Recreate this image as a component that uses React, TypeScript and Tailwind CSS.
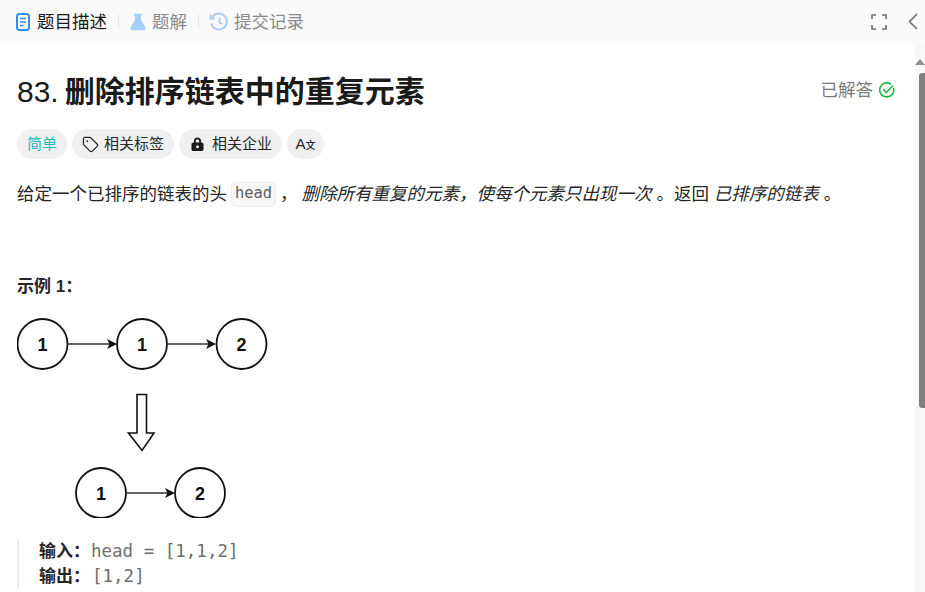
import { Tag } from "lucide-react";

const cjk = "font-['Liberation_Sans','Noto_Sans_CJK_SC',sans-serif]";
const mono = "font-['DejaVu_Sans_Mono',monospace]";

function DescriptionIcon() {
  return (
    <svg width="14" height="18" viewBox="0 0 14 18" fill="none">
      <rect x="1" y="1" width="12" height="16" rx="2.5" stroke="#2f8cf4" strokeWidth="2" />
      <path d="M4 5.5h6M4 9h6M4 12.5h3.5" stroke="#2f8cf4" strokeWidth="1.6" />
    </svg>
  );
}

function FlaskIcon() {
  return (
    <svg width="16" height="18" viewBox="0 0 16 18">
      <path
        d="M4 .8h8v1.600h-1v4.400l4.400 7.600c.7 1.300-.1 2.800-1.600 2.800H2.200c-1.500 0-2.300-1.500-1.600-2.800L5 6.800V2.400H4z"
        fill="#a6cefa"
      />
    </svg>
  );
}

function HistoryIcon() {
  return (
    <svg width="20" height="20" viewBox="0 0 20 20" fill="none" stroke="#a6cefa" strokeWidth="1.9">
      <path d="M3.200 5.200A8 8 0 1 1 2.200 11.500" />
      <path d="M1.500 2.500v4h4" />
      <path d="M10.500 6v4.500l3 1.800" />
    </svg>
  );
}

function FullscreenIcon() {
  return (
    <svg width="16" height="16" viewBox="0 0 16 16" fill="none" stroke="#6f6f6f" strokeWidth="1.600">
      <path d="M1 5V1h4M11 1h4v4M15 11v4h-4M5 15H1v-4" />
    </svg>
  );
}

function CollapseIcon() {
  return (
    <svg width="10" height="17" viewBox="0 0 10 17" fill="none" stroke="#6f6f6f" strokeWidth="1.600">
      <path d="M9 1L1.500 8.500 9 16" />
    </svg>
  );
}

function SolvedIcon() {
  return (
    <svg width="16" height="16" viewBox="0 0 16 16" fill="none" stroke="#1cb83a" strokeWidth="1.600">
      <path d="M14.600 6.500A7 7 0 1 1 11.500 2" strokeLinecap="round" />
      <path d="M4.800 7.800l2.600 2.500 6.200-6.300" strokeLinecap="round" />
    </svg>
  );
}

function LockIcon() {
  return (
    <svg width="13" height="14" viewBox="0 0 13 14">
      <path
        fillRule="evenodd"
        d="M3 5.500V4a3.500 3.500 0 0 1 7 0v1.500h.7c1 0 1.800.8 1.800 1.800v4.900c0 1-.8 1.800-1.800 1.800H2.300c-1 0-1.800-.8-1.800-1.800V7.300c0-1 .8-1.800 1.800-1.800zM4.800 5.500h3.400V4a1.700 1.700 0 0 0-3.400 0zM6.500 8.200a1.500 1.500 0 1 0 0 3 1.500 1.500 0 0 0 0-3z"
        fill="#1a1a1a"
      />
    </svg>
  );
}

function Divider() {
  return <div className="h-[15px] w-px bg-[#e8e8e8]" />;
}

function Node({ x, y, label }: { x: number; y: number; label: string }) {
  return (
    <g>
      <circle cx={x} cy={y} r="25" fill="#fff" stroke="#111" strokeWidth="1.800" />
      <text
        x={x}
        y={y + 6.500}
        textAnchor="middle"
        fontSize="18"
        fontWeight="700"
        fontFamily="Liberation Sans, sans-serif"
        fill="#111"
      >
        {label}
      </text>
    </g>
  );
}

function Arrow({ x1, x2, y }: { x1: number; x2: number; y: number }) {
  return (
    <g>
      <line x1={x1} x2={x2 - 6} y1={y} y2={y} stroke="#333" strokeWidth="1.700" />
      <path d={`M${x2} ${y}l-10 -5 2.500 5 -2.500 5z`} fill="#111" />
    </g>
  );
}

function Diagram() {
  return (
    <svg width="252" height="200" viewBox="0 0 252 200" className="mt-[19px] block">
      <Node x={25.500} y={26} label="1" />
      <Arrow x1={51} x2={100} y={26} />
      <Node x={125} y={26} label="1" />
      <Arrow x1={151} x2={199} y={26} />
      <Node x={224.500} y={26} label="2" />
      <path
        d="M120 76.500h9.500v38.500h7.500L125 132.500 111.500 115h8.500z"
        fill="#fff"
        stroke="#111"
        strokeWidth="1.600"
      />
      <Node x={84} y={175} label="1" />
      <Arrow x1={110} x2={158} y={175} />
      <Node x={183} y={175} label="2" />
    </svg>
  );
}

export default function App() {
  return (
    <div className={`flex h-[592px] w-[925px] flex-col overflow-hidden bg-white ${cjk}`}>
      {/* Tabs */}
      <div className="flex h-[43px] shrink-0 items-center bg-[#fafafa] pl-[16px] pr-[7px]">
        <DescriptionIcon />
        <span className="ml-[7px] translate-y-px text-[17.500px] text-[#1a1a1a]">题目描述</span>
        <div className="mx-[11px]">
          <Divider />
        </div>
        <FlaskIcon />
        <span className="ml-[6px] translate-y-px text-[17.500px] text-[#8a8a8a]">题解</span>
        <div className="ml-[11px] mr-[10px]">
          <Divider />
        </div>
        <HistoryIcon />
        <span className="ml-[5px] translate-y-px text-[17.500px] text-[#8a8a8a]">提交记录</span>
        <div className="ml-auto flex items-center gap-[21px]">
          <FullscreenIcon />
          <CollapseIcon />
        </div>
      </div>

      <div className="flex min-h-0 flex-1">
        <div className="min-w-0 flex-1 pl-[17px] pr-[20px]">
          <div className="mt-[29px] flex items-start justify-between">
            <h1 className="text-[30px] leading-[40px] text-[#1a1a1a]">
              <span className="font-normal">83.</span>
              <span className="ml-[6px] font-bold">删除排序链表中的重复元素</span>
            </h1>
            <div className="mt-[6px] flex items-center gap-[6px]">
              <span className="text-[17.500px] leading-[24px] text-[#7a7a7a]">已解答</span>
              <SolvedIcon />
            </div>
          </div>

          <div className="mt-[17px] flex gap-[5px]">
            <div className="flex h-[30px] items-center rounded-full bg-[#f0f0f0] px-[10px] text-[15px] text-[#1cbaba]">
              简单
            </div>
            <div className="flex h-[30px] items-center gap-[5px] rounded-full bg-[#f0f0f0] pl-[10px] pr-[10px] text-[15px] text-[#262626]">
              <Tag size={17} strokeWidth={1.800} />
              相关标签
            </div>
            <div className="flex h-[30px] items-center gap-[8px] rounded-full bg-[#f0f0f0] pl-[12px] pr-[10px] text-[15px] text-[#262626]">
              <LockIcon />
              相关企业
            </div>
            <div className="flex h-[30px] w-[37px] items-center justify-center rounded-full bg-[#f0f0f0] text-[15px] text-[#262626]">
              <span>A</span>
              <span className="translate-y-px text-[10px] font-medium">文</span>
            </div>
          </div>

          <p className="mt-[22px] flex h-[26px] items-center whitespace-pre text-[17.500px] text-[#262626]">
            给定一个已排序的链表的头
            <code className={`mx-[4px] flex h-[25px] items-center rounded-[5px] border border-[#ececec] bg-[#f7f7f7] px-[3px] text-[15.400px] text-[#5c5c5c] ${mono}`}>
              head
            </code>
            ，<em className="ml-[4px] italic">删除所有重复的元素，使每个元素只出现一次</em> 。返回 <em className="italic">已排序的链表</em> 。
          </p>

          <div className="mt-[68px] text-[17px] font-bold leading-[24px] text-[#262626]">示例 1：</div>

          <Diagram />

          <div className="mt-[21px] border-l-2 border-[#eeeeee] pl-[20px] text-[17px] leading-[25px] text-[#262626]">
            <div className="flex items-center">
              <strong className="w-[52px] font-bold">输入：</strong>
              <span className={`text-[17.500px] text-[#6e6e6e] ${mono}`}>head = [1,1,2]</span>
            </div>
            <div className="flex items-center">
              <strong className="w-[53px] font-bold">输出：</strong>
              <span className={`text-[17.500px] text-[#6e6e6e] ${mono}`}>[1,2]</span>
            </div>
          </div>
        </div>

        {/* Scrollbar */}
        <div className="flex w-[10px] shrink-0 flex-col items-end bg-[#f8f8f8]">
          <div className="mt-[16px] h-0 w-0 border-x-[5px] border-b-[6px] border-x-transparent border-b-[#8c8c8c]" />
          <div className="mt-[8px] h-[335px] w-[6px] rounded-l-[3px] bg-[#808080]" />
        </div>
      </div>
    </div>
  );
}
